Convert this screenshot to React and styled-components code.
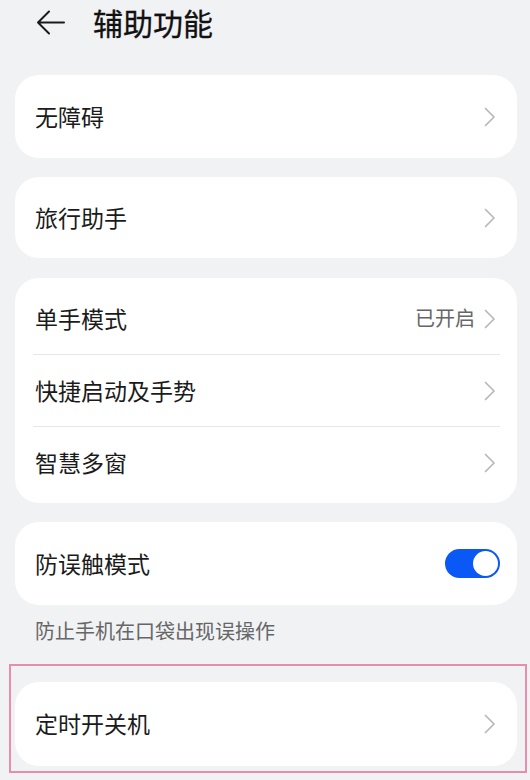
import React from 'react'
import styled, { createGlobalStyle } from 'styled-components'

const GlobalStyle = createGlobalStyle`
  html, body {
    margin: 0;
    padding: 0;
    background: #f1f2f4;
  }
  body {
    font-family: 'Noto Sans CJK SC', 'Noto Sans', sans-serif;
    color: #1b1b1b;
  }
`

const Page = styled.div`
  width: 530px;
  height: 780px;
  box-sizing: border-box;
  padding: 0 13px 0 15px;
  display: flex;
  flex-direction: column;
  overflow: hidden;
`

const Header = styled.div`
  height: 44px;
  display: flex;
  align-items: center;
  margin-bottom: 31px;
`

const Back = styled.div`
  width: 29px;
  height: 25px;
  margin-left: 21px;
  margin-right: 28px;
  display: flex;
  svg {
    display: block;
  }
`

const Title = styled.h1`
  margin: 0;
  font-size: 30px;
  font-weight: 400;
  color: #111;
  letter-spacing: 0;
  -webkit-text-stroke: 0.3px #111;
`

const Card = styled.div`
  background: #fff;
  border-radius: 24px;
  padding: ${p => (p.$group ? '5px 0' : '0')};
  margin-bottom: ${p => p.$mb || 0}px;
  display: flex;
  flex-direction: column;
`

const Row = styled.div`
  height: ${p => p.$h || 71}px;
  display: flex;
  align-items: center;
  padding: 0 20px;
`

const Label = styled.span`
  flex: 1;
  font-size: 23px;
  color: #1b1b1b;
  margin-top: -2px;
`

const Value = styled.span`
  font-size: 20px;
  color: #666;
  margin-right: 9px;
  margin-top: -2px;
`

const Divider = styled.div`
  height: 1px;
  background: #e6e6e6;
  margin: 0 17px 0 18px;
`

const Chevron = styled.svg`
  width: 12px;
  height: 20px;
  margin-right: 1px;
  display: block;
`

const Toggle = styled.div`
  position: relative;
  width: 55px;
  height: 29px;
  border-radius: 15px;
  background: ${p => (p.$on ? '#0a59f7' : '#ccc')};
  margin-right: -3px;
  &::after {
    content: '';
    position: absolute;
    top: 2px;
    left: ${p => (p.$on ? '28px' : '2px')};
    width: 25px;
    height: 25px;
    border-radius: 50%;
    background: #fff;
  }
`

const Note = styled.div`
  font-size: 20px;
  line-height: 28px;
  color: #666;
  padding-left: 20px;
  margin-top: 12px;
  margin-bottom: 19px;
`

const Highlight = styled.div`
  border: 2px solid #ea8cad;
  margin: 0 -10px 0 -6px;
  padding: 16px 8px 5px 4px;
`

const Arrow = () => (
  <Chevron viewBox="0 0 12 20">
    <path d="M1.5 1.5 L10 10 L1.5 18.5" fill="none" stroke="#b8b8b8" strokeWidth="1.7" strokeLinecap="round" strokeLinejoin="round" />
  </Chevron>
)

const Item = ({ label, value, h, children }) => (
  <Row $h={h}>
    <Label>{label}</Label>
    {value && <Value>{value}</Value>}
    {children || <Arrow />}
  </Row>
)

export default function App() {
  return (
    <>
      <GlobalStyle />
      <Page>
        <Header>
          <Back>
            <svg width="29" height="25" viewBox="0 0 29 25">
              <path d="M13 1.5 L2 12.5 L13 23.5 M2 12.5 H28" fill="none" stroke="#1a1a1a" strokeWidth="2" strokeLinecap="round" strokeLinejoin="round" />
            </svg>
          </Back>
          <Title>辅助功能</Title>
        </Header>

        <Card $mb={19}>
          <Item label="无障碍" h={83} />
        </Card>

        <Card $mb={20}>
          <Item label="旅行助手" h={81} />
        </Card>

        <Card $group $mb={19}>
          <Item label="单手模式" value="已开启" />
          <Divider />
          <Item label="快捷启动及手势" />
          <Divider />
          <Item label="智慧多窗" />
        </Card>

        <Card>
          <Item label="防误触模式" h={83}>
            <Toggle $on />
          </Item>
        </Card>

        <Note>防止手机在口袋出现误操作</Note>

        <Highlight>
          <Card>
            <Item label="定时开关机" h={84} />
          </Card>
        </Highlight>
      </Page>
    </>
  )
}
